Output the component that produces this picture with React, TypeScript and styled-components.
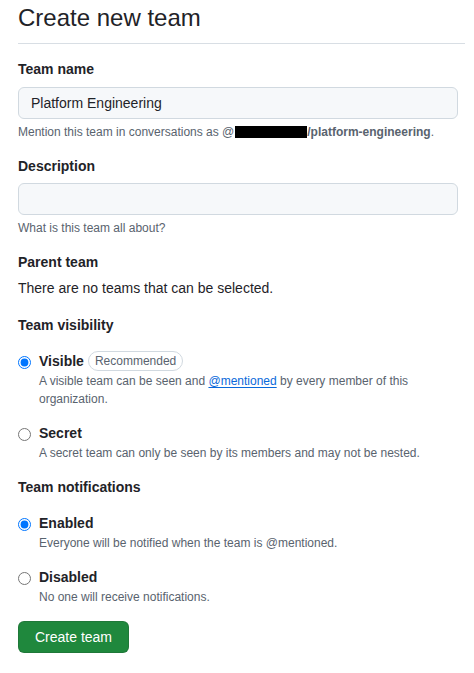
import React from 'react'
import styled, { createGlobalStyle } from 'styled-components'

const GlobalStyle = createGlobalStyle`
  body {
    margin: 0;
    background: #ffffff;
    color: #1f2328;
    font-family: "Liberation Sans", Arial, sans-serif;
    font-size: 14px;
    line-height: 20px;
  }
`

const Page = styled.div`
  padding: 0 9px 0 18px;
  width: 447px;
`

const PageHead = styled.div`
  padding: 3px 0 10px;
  border-bottom: 1px solid #d8dee4;
`

const Title = styled.h1`
  margin: 0;
  font-size: 24px;
  line-height: 30px;
  font-weight: 400;
`

const FormGroup = styled.div<{ top?: number }>`
  margin-top: ${p => p.top ?? 15}px;
`

const Label = styled.div`
  font-size: 14px;
  line-height: 20px;
  font-weight: 700;
`

const TextInput = styled.input<{ gap?: number }>`
  display: block;
  box-sizing: border-box;
  width: 440px;
  height: 32px;
  margin-top: ${p => p.gap ?? 8}px;
  padding: 0 12px;
  background: #f6f8fa;
  border: 1px solid #d1d9e0;
  border-radius: 6px;
  color: #1f2328;
  font-family: "Liberation Sans", Arial, sans-serif;
  font-size: 14px;
  outline: none;
`

const Note = styled.p`
  margin: 4px 0 0;
  font-size: 12px;
  line-height: 18px;
  color: #59636e;
`

const Redacted = styled.span`
  display: inline-block;
  width: 72px;
  height: 12px;
  margin-left: 1px;
  background: #000000;
  vertical-align: -2px;
`

const Strong = styled.strong`
  font-weight: 700;
  color: #59636e;
`

const Plain = styled.p`
  margin: 6px 0 0;
  font-size: 14px;
  line-height: 20px;
`

const Option = styled.div<{ top?: number }>`
  display: grid;
  grid-template-columns: 13px 1fr;
  column-gap: 8px;
  margin-top: ${p => p.top ?? 15}px;
`

const Radio = styled.input`
  width: 13px;
  height: 13px;
  margin: 5px 0 0;
`

const OptionLabel = styled.label`
  display: flex;
  align-items: center;
  gap: 4px;
  font-size: 14px;
  line-height: 20px;
  font-weight: 700;
`

const Badge = styled.span`
  display: inline-block;
  padding: 0 6px;
  border: 1px solid #d1d9e0;
  border-radius: 2em;
  font-size: 12px;
  line-height: 18px;
  font-weight: 400;
  color: #59636e;
`

const OptionNote = styled.p`
  grid-column: 2;
  margin: 1px 0 0;
  font-size: 12px;
  line-height: 18px;
  color: #59636e;
`

const Link = styled.a`
  color: #0969da;
  text-decoration: underline;
  text-underline-offset: 2px;
`

const PrimaryButton = styled.button`
  margin-top: 15px;
  height: 32px;
  padding: 0 16px;
  background: #1f883d;
  border: 1px solid rgba(31, 35, 40, 0.15);
  border-radius: 6px;
  color: #ffffff;
  font-family: "Liberation Sans", Arial, sans-serif;
  font-size: 14px;
  line-height: 20px;
  cursor: pointer;
`

export default function App() {
  return (
    <Page>
      <GlobalStyle />
      <PageHead>
        <Title>Create new team</Title>
      </PageHead>

      <FormGroup>
        <Label>Team name</Label>
        <TextInput defaultValue="Platform Engineering" />
        <Note>
          Mention this team in conversations as @<Redacted />
          <Strong>/platform-engineering</Strong>.
        </Note>
      </FormGroup>

      <FormGroup>
        <Label>Description</Label>
        <TextInput gap={7} />
        <Note>What is this team all about?</Note>
      </FormGroup>

      <FormGroup>
        <Label>Parent team</Label>
        <Plain>There are no teams that can be selected.</Plain>
      </FormGroup>

      <FormGroup top={17}>
        <Label>Team visibility</Label>
        <Option top={16}>
          <Radio type="radio" name="visibility" id="vis-visible" defaultChecked />
          <OptionLabel htmlFor="vis-visible">
            Visible<Badge>Recommended</Badge>
          </OptionLabel>
          <OptionNote>
            A visible team can be seen and <Link href="#">@mentioned</Link> by every member of this
            organization.
          </OptionNote>
        </Option>
        <Option>
          <Radio type="radio" name="visibility" id="vis-secret" />
          <OptionLabel htmlFor="vis-secret">Secret</OptionLabel>
          <OptionNote>A secret team can only be seen by its members and may not be nested.</OptionNote>
        </Option>
      </FormGroup>

      <FormGroup>
        <Label>Team notifications</Label>
        <Option top={16}>
          <Radio type="radio" name="notifications" id="notif-on" defaultChecked />
          <OptionLabel htmlFor="notif-on">Enabled</OptionLabel>
          <OptionNote>Everyone will be notified when the team is @mentioned.</OptionNote>
        </Option>
        <Option>
          <Radio type="radio" name="notifications" id="notif-off" />
          <OptionLabel htmlFor="notif-off">Disabled</OptionLabel>
          <OptionNote>No one will receive notifications.</OptionNote>
        </Option>
      </FormGroup>

      <PrimaryButton type="button">Create team</PrimaryButton>
    </Page>
  )
}
